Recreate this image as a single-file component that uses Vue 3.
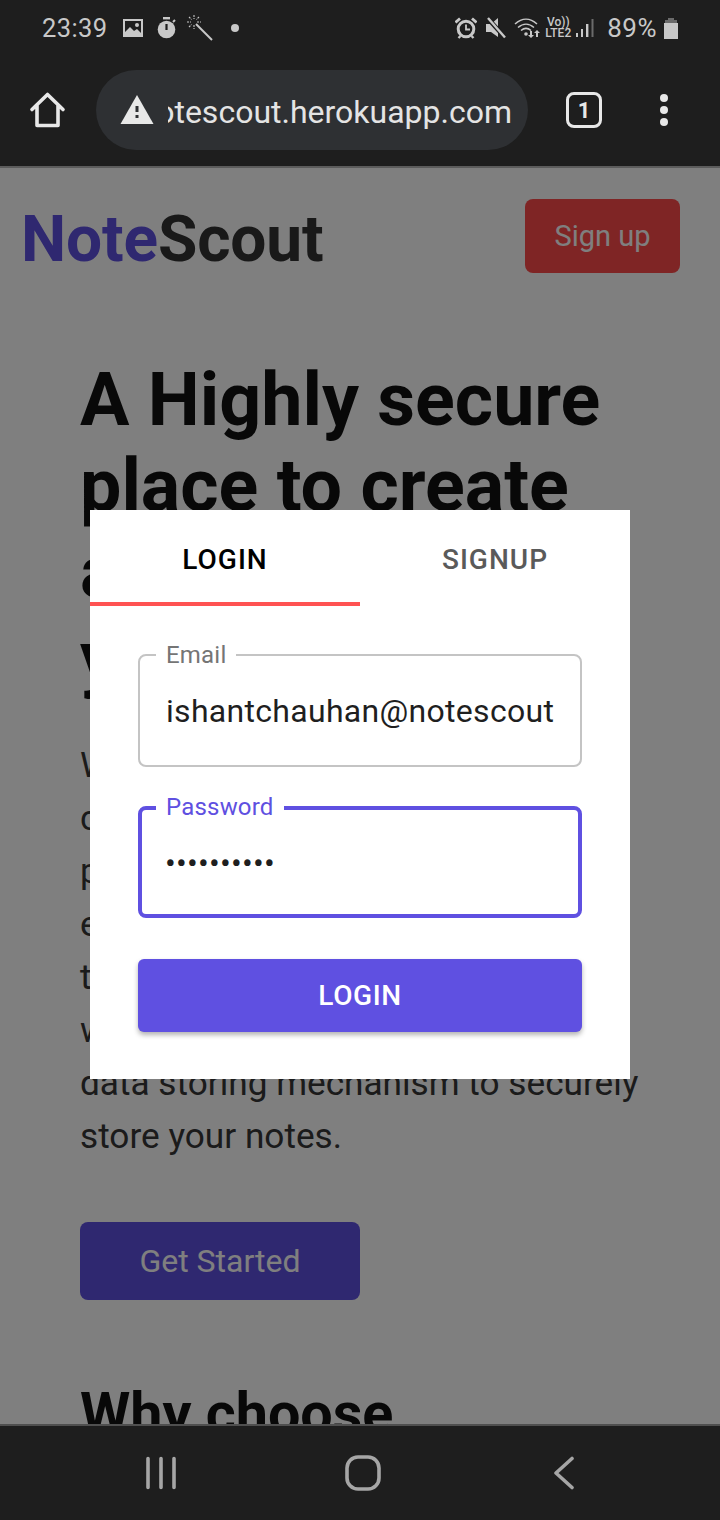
<script setup>
const tabs = [
  { label: 'LOGIN', active: true },
  { label: 'SIGNUP', active: false }
]
const copy = [
  'We use the latest and most',
  'cutting edge encryption to',
  'protect everything that you',
  'enter. We make sure that',
  'the information is safe',
  'with us using a reliable',
  'data storing mechanism to securely',
  'store your notes.'
]
</script>

<template>
  <div class="phone">
    <header class="chrome">
      <div class="status">
        <div class="status-left">
          <span class="time">23:39</span>
          <svg class="ic" width="22" height="20" viewBox="0 0 22 20"><path fill="#c8c8c8" fill-rule="evenodd" d="M1 1h20v18H1zM3 3v14h16V3z"/><path fill="#c8c8c8" d="M3 17v-3l5-5 4 4 3-2 4 4v2z"/><circle cx="15" cy="7" r="2" fill="#c8c8c8"/></svg>
          <svg class="ic timer" width="20" height="22" viewBox="0 0 20 22"><rect x="6" y="0" width="7" height="2.400" fill="#c8c8c8"/><circle cx="9.500" cy="12.500" r="8.800" fill="#c8c8c8"/><rect x="8.400" y="7" width="2.200" height="6" fill="#1e1e1e"/><path d="M16 5l2-2" stroke="#c8c8c8" stroke-width="2"/></svg>
          <svg class="ic wand" width="26" height="26" viewBox="0 0 26 26"><path d="M9 9l16 16" stroke="#c8c8c8" stroke-width="2"/><path d="M7 0v4M7 10v4M0 7h4M10 7h4M2 2l2.500 2.500M12 2L9.500 4.500M2 12l2.500-2.500" stroke="#c8c8c8" stroke-width="1.100" stroke-dasharray="2 1"/></svg>
          <span class="dot"></span>
        </div>
        <div class="status-right">
          <svg class="alarm" width="22" height="22" viewBox="0 0 22 22"><circle cx="11" cy="12" r="7.800" fill="none" stroke="#c8c8c8" stroke-width="3"/><path d="M11 7.500V12.500H15" fill="none" stroke="#c8c8c8" stroke-width="1.800"/><path d="M.5 5.500L5 1.500M21.500 5.500L17 1.500" stroke="#c8c8c8" stroke-width="2.800"/><path d="M3.500 21l2-2M18.500 21l-2-2" stroke="#c8c8c8" stroke-width="2.400"/></svg>
          <svg class="mute" width="20" height="22" viewBox="0 0 20 22"><path fill="#c8c8c8" d="M0 7h5l7-6v19l-7-5H0z"/><path d="M1.500 1l17 19" stroke="#1e1e1e" stroke-width="4.500"/><path d="M2 1l17 19.500" stroke="#c8c8c8" stroke-width="2.400"/></svg>
          <svg class="wifi" width="26" height="22" viewBox="0 0 26 22"><path d="M1 7c7-6.500 15-6.500 22 0M4 10.500c5-4.500 11-4.500 16 0M7 13.500c3.500-3 6.500-3 10 0" fill="none" stroke="#c8c8c8" stroke-width="1.500"/><circle cx="12" cy="17" r="1.800" fill="#c8c8c8"/><path fill="#c8c8c8" d="M16 14h2v4h2l-3 3-3-3h2zM23 13l3 3h-2v4h-2v-4h-2z"/></svg>
          <span class="net"><span>Vo))</span><span>LTE2</span></span>
          <svg class="bars" width="18" height="20" viewBox="0 0 18 20"><path fill="#c8c8c8" d="M0 15h2v4H0zM5 11h2v8H5zM10 6h2.400v13H10z"/><path fill="#6b6b6b" d="M15.500 1H17.500V19H15.500z"/></svg>
          <span class="pct">89%</span>
          <svg width="14" height="21" viewBox="0 0 14 21"><path fill="#6b6b6b" d="M4 0h6v3H4z"/><path fill="#6b6b6b" d="M1 2h12v4H1z"/><path fill="#c8c8c8" d="M0 5h14v16H0z"/></svg>
        </div>
      </div>
      <div class="toolbar">
        <svg class="home" width="38" height="38" viewBox="0 0 38 38"><path d="M3 18.500L18.500 3.500 34 18.500M8 14.500V34.500H29V14.500" fill="none" stroke="#e8e8e8" stroke-width="3.600" stroke-linejoin="round" stroke-linecap="round"/></svg>
        <div class="omnibox">
          <svg width="34" height="30" viewBox="0 0 34 30"><path fill="#e8e8e8" d="M17 0l16.500 29H.5z"/><path fill="#2e3033" d="M15.500 11h3v6h-3zM15.500 20h3v3h-3z"/></svg>
          <div class="url-clip"><span class="url">otescout.herokuapp.com</span></div>
        </div>
        <div class="tabs-count">1</div>
        <div class="more"><i></i><i></i><i></i></div>
      </div>
    </header>

    <main class="viewport">
      <div class="page">
        <div class="topbar">
          <div class="logo"><span class="logo-note">Note</span>Scout</div>
          <button class="signup">Sign up</button>
        </div>
        <section class="hero">
          <h1>A Highly secure<br>place to create<br>and manage<br>your notes</h1>
          <p class="copy"><span v-for="line in copy" :key="line">{{ line }}</span></p>
          <button class="start">Get Started</button>
          <h2>Why choose NoteScout?</h2>
        </section>
      </div>

      <div class="overlay">
        <div class="dialog">
          <div class="dialog-tabs">
            <div v-for="t in tabs" :key="t.label" class="tab" :class="{ on: t.active }">{{ t.label }}</div>
          </div>
          <form class="form" @submit.prevent>
            <fieldset class="field">
              <legend>Email</legend>
              <div class="value">ishantchauhan@notescout</div>
            </fieldset>
            <fieldset class="field focus">
              <legend>Password</legend>
              <div class="value dots">••••••••••</div>
            </fieldset>
            <button class="submit">LOGIN</button>
          </form>
        </div>
      </div>
    </main>

    <footer class="nav">
      <svg width="30" height="34" viewBox="0 0 30 34"><path d="M2 2.500V31.500M15 2.500V31.500M28 2.500V31.500" stroke="#a6a6a6" stroke-width="3.600" stroke-linecap="round"/></svg>
      <svg class="nav-home" width="36" height="36" viewBox="0 0 36 36"><rect x="2" y="2" width="32" height="32" rx="11" fill="none" stroke="#a6a6a6" stroke-width="3.600"/></svg>
      <svg width="21" height="34" viewBox="0 0 21 34"><path d="M19 2.500L3 17 19 31.500" fill="none" stroke="#a6a6a6" stroke-width="3.600" stroke-linecap="round" stroke-linejoin="round"/></svg>
    </footer>
  </div>
</template>

<style>
html, body { margin: 0; background: #1e1e1e; }
</style>

<style scoped>
* { box-sizing: border-box; }
.phone {
  width: 720px; height: 1520px; display: flex; flex-direction: column; overflow: hidden;
  font-family: Roboto, "Liberation Sans", sans-serif;
}
.chrome { height: 168px; flex: none; background: #1e1e1e; border-bottom: 2px solid #5c5c5c; }
.status { height: 54px; padding: 2px 42px 0 42px; display: flex; justify-content: space-between; align-items: center; color: #c8c8c8; }
.status-left, .status-right { display: flex; align-items: center; }
.time { font-size: 25.500px; letter-spacing: .4px; margin-right: 14px; }
.timer { margin-left: 13px; }
.wand { margin-left: 10px; }
.dot { width: 8px; height: 8px; border-radius: 50%; background: #c8c8c8; margin-left: 18px; }
.mute { margin-left: 9px; }
.wifi { margin-left: 8px; }
.net { display: flex; flex-direction: column; align-items: center; font-size: 12px; line-height: 11px; font-weight: 500; margin-left: 5px; }
.bars { margin-left: 5px; }
.pct { font-size: 26px; margin-left: 13px; letter-spacing: .5px; margin-right: 7px; }

.toolbar { height: 112px; display: flex; align-items: center; padding: 0 0 0 29px; }
.home { flex: none; }
.omnibox {
  width: 432px; height: 80px; margin-left: 29px; border-radius: 40px; background: #2e3033;
  display: flex; align-items: center; padding-left: 24px; flex: none;
}
.url-clip { width: 344px; margin-left: 14px; padding-top: 4px; overflow: hidden; color: #e4e4e4; font-size: 32px; direction: rtl; white-space: nowrap; }
.url { direction: ltr; unicode-bidi: bidi-override; }
.tabs-count {
  width: 36px; height: 36px; margin-left: 38px; border: 3.500px solid #e8e8e8; border-radius: 8px; flex: none;
  color: #e8e8e8; font-size: 22px; font-weight: 700; display: flex; align-items: center; justify-content: center;
}
.more { margin-left: 58px; display: flex; flex-direction: column; gap: 4px; }
.more i { display: block; width: 8px; height: 8px; border-radius: 50%; background: #e8e8e8; }

.viewport { position: relative; flex: 1; overflow: hidden; background: #fff; }
.topbar { display: flex; justify-content: space-between; align-items: center; padding: 31px 40px 0 21px; }
.logo { font-size: 64px; font-weight: 700; line-height: 66px; padding-top: 8px; color: #333; letter-spacing: -.15px; }
.logo-note { color: #5f50e1; }
.signup {
  width: 155px; height: 74px; border: 0; border-radius: 8px; background: #ff4a4a; color: #fff;
  font: 400 29px Roboto, sans-serif;
}
.hero { padding: 0 80px; }
h1 { margin: 84px 0 0; font-size: 73.600px; line-height: 86px; font-weight: 700; color: #111; }
.copy { margin: 38px 0 0; font-size: 35.200px; line-height: 53px; color: #363636; }
.copy span { display: block; white-space: nowrap; }
.start {
  display: block; width: 280px; height: 78px; margin-top: 59px; border: 0; border-radius: 8px; background: #5f50e1;
  color: #fff; font: 400 32px Roboto, sans-serif;
}
h2 { margin: 84px 0 0; font-size: 57.500px; line-height: 60px; font-weight: 700; color: #111; width: 400px; }

.overlay {
  position: absolute; inset: 0; background: rgba(0,0,0,.5);
  display: flex; align-items: center; justify-content: center; padding-bottom: 3px;
}
.dialog { width: 540px; height: 569px; background: #fff; }
.dialog-tabs { display: flex; height: 96px; }
.tab {
  flex: 1; display: flex; align-items: center; justify-content: center; padding-top: 7px;
  font-size: 28px; font-weight: 500; letter-spacing: 1px; color: #5a5a5a;
  border-bottom: 4px solid transparent;
}
.tab.on { color: #000; border-bottom-color: #ff5252; }
.form { padding: 35px 48px 0; display: flex; flex-direction: column; }
.field {
  margin: 0; padding: 0 26px; height: 126px; border: 2px solid #c4c4c4; border-radius: 8px;
  min-width: 0;
}
.field legend { font-size: 24px; line-height: 28px; color: #757575; padding: 0 10px; margin-left: -10px; height: 28px; letter-spacing: .2px; }
.field .value { font-size: 32px; line-height: 40px; padding-top: 22px; color: #1f1f1f; white-space: nowrap; overflow: hidden; letter-spacing: .3px; }
.field.focus { border: 4px solid #5f50e1; padding: 0 24px; margin-top: 27px; height: 124px; }
.field.focus legend { color: #5f50e1; line-height: 26px; }
.field .dots { font-size: 32px; padding-top: 21px; letter-spacing: .2px; margin-left: -1px; }
.submit {
  height: 73px; margin-top: 41px; border: 0; border-radius: 6px; background: #5f50e1; color: #fff;
  font: 500 28px Roboto, sans-serif; letter-spacing: .6px;
  box-shadow: 0 3px 5px rgba(0,0,0,.3);
}

.nav {
  height: 96px; flex: none; background: #1e1e1e; border-top: 2px solid #4f4f4f;
  display: flex; align-items: center; padding: 0 146px; justify-content: space-between;
}
.nav-home { margin-right: 4px; }
</style>
